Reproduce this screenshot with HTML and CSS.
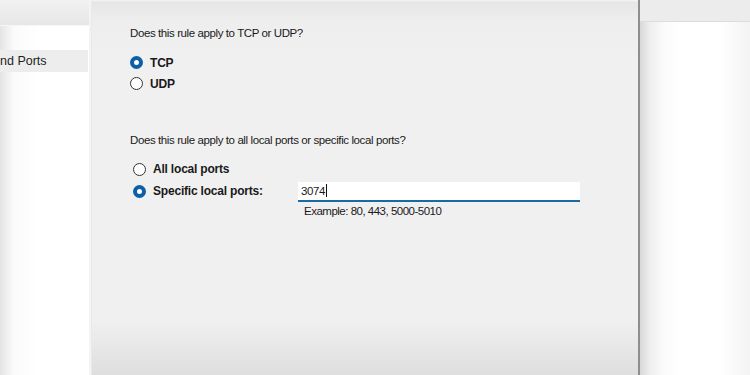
FILE: index.html
```html
<!DOCTYPE html>
<html>
<head>
    <title>New Inbound Rule Wizard</title>
    <link rel="stylesheet" href="styles.css">
</head>
<body>
    <div class="nav">
        <div class="nav-head"></div>
        <div class="nav-item"></div>
        <div class="nav-item selected">nd Ports</div>
    </div>
    <div class="nav-edge"></div>
    <div class="main">
        <div class="content">
            <p class="question">Does this rule apply to TCP or UDP?</p>
            <div class="options first">
                <div class="option"><span class="radio checked"></span><span class="label">TCP</span></div>
                <div class="option"><span class="radio"></span><span class="label">UDP</span></div>
            </div>
            <p class="question second">Does this rule apply to all local ports or specific local ports?</p>
            <div class="options ports">
                <div class="option"><span class="radio"></span><span class="label">All local ports</span></div>
                <div class="option">
                    <span class="radio checked"></span><span class="label wide">Specific local ports:</span>
                    <div class="field"><span class="value">3074</span><span class="caret"></span></div>
                </div>
                <p class="hint">Example: 80, 443, 5000-5010</p>
            </div>
        </div>
        <div class="footer"></div>
    </div>
    <div class="side">
        <div class="side-head"></div>
        <div class="side-body"></div>
    </div>
</body>
</html>
```

FILE: styles.css
```css
body {
    display: flex;
    margin: 0;
    height: 375px;
    overflow: hidden;
    font-family: "Liberation Sans", Arial, sans-serif;
    font-size: 12px;
    color: #1a1a1a;
    background: #f0f0f0;
}

/* left list */
.nav {
    width: 89px;
    display: flex;
    flex-direction: column;
    background: linear-gradient(to right, #e4e4e4 0, #fbfbfb 14px, #fff 40px);
}

.nav-head {
    height: 25px;
    background: linear-gradient(to bottom, #f2f2f2, #e6e6e6);
    border-bottom: 1px solid #f7f7f7;
}

.nav-item {
    height: 24px;
}

.nav-item.selected {
    height: 22px;
    line-height: 22px;
    background: #ededed;
    font-size: 12.5px;
    color: #1e1e1e;
    margin-right: 1px;
}

.nav-edge {
    width: 3px;
    background: linear-gradient(to right, #ebebeb, #fdfdfd 1px, #e9e9e9 2px);
}

/* main page */
.main {
    width: 546px;
    display: flex;
    flex-direction: column;
    justify-content: space-between;
    background: linear-gradient(to bottom, #f7f7f7 0, #e6e6e6 2px, #eeeeee 22px, #f0f0f0 60px);
    border-right: 2px solid #8e8e8e;
}

.content {
    padding: 26px 0 0 38px;
}

.question {
    margin: 0;
    height: 14px;
    line-height: 14px;
    font-size: 11.5px;
    letter-spacing: -0.4px;
}

.question.second {
    margin-top: 39px;
}

.options.first {
    margin-top: 12px;
}

.options.ports {
    margin-top: 11px;
    padding-left: 3px;
}

.option {
    display: flex;
    align-items: center;
    height: 21px;
}

.options.ports .option {
    height: 22px;
}

.radio {
    box-sizing: border-box;
    width: 13px;
    height: 13px;
    border-radius: 50%;
    border: 1px solid #333;
    background: #fff;
    margin-right: 7px;
}

.radio.checked {
    border: 4px solid #0f5fa6;
}

.label {
    font-weight: bold;
    letter-spacing: -0.2px;
}

.label.wide {
    width: 145px;
}

.field {
    display: flex;
    align-items: center;
    width: 279px;
    height: 18px;
    margin-top: 1px;
    background: #fff;
    border-bottom: 2px solid #1a6aa6;
    padding-left: 3px;
}

.value {
    font-size: 11.5px;
    letter-spacing: -0.4px;
}

.caret {
    width: 1px;
    height: 13px;
    background: #111;
    margin-left: 1px;
}

.hint {
    margin: 3px 0 0 171px;
    font-size: 11.5px;
    letter-spacing: -0.5px;
}

.footer {
    height: 55px;
    background: linear-gradient(to bottom, #f0f0f0, #dedede);
}

/* right pane */
.side {
    flex: 1;
    display: flex;
    flex-direction: column;
}

.side-head {
    height: 21px;
    background: #ececec;
    border-bottom: 1px solid #dcdcdc;
}

.side-body {
    flex: 1;
    background: linear-gradient(to right, #d8d8d8 0, #eeeeee 10px, #fbfbfb 24px, #fff 40px, #fff 80px, #f3f3f3 110px);
}
```
